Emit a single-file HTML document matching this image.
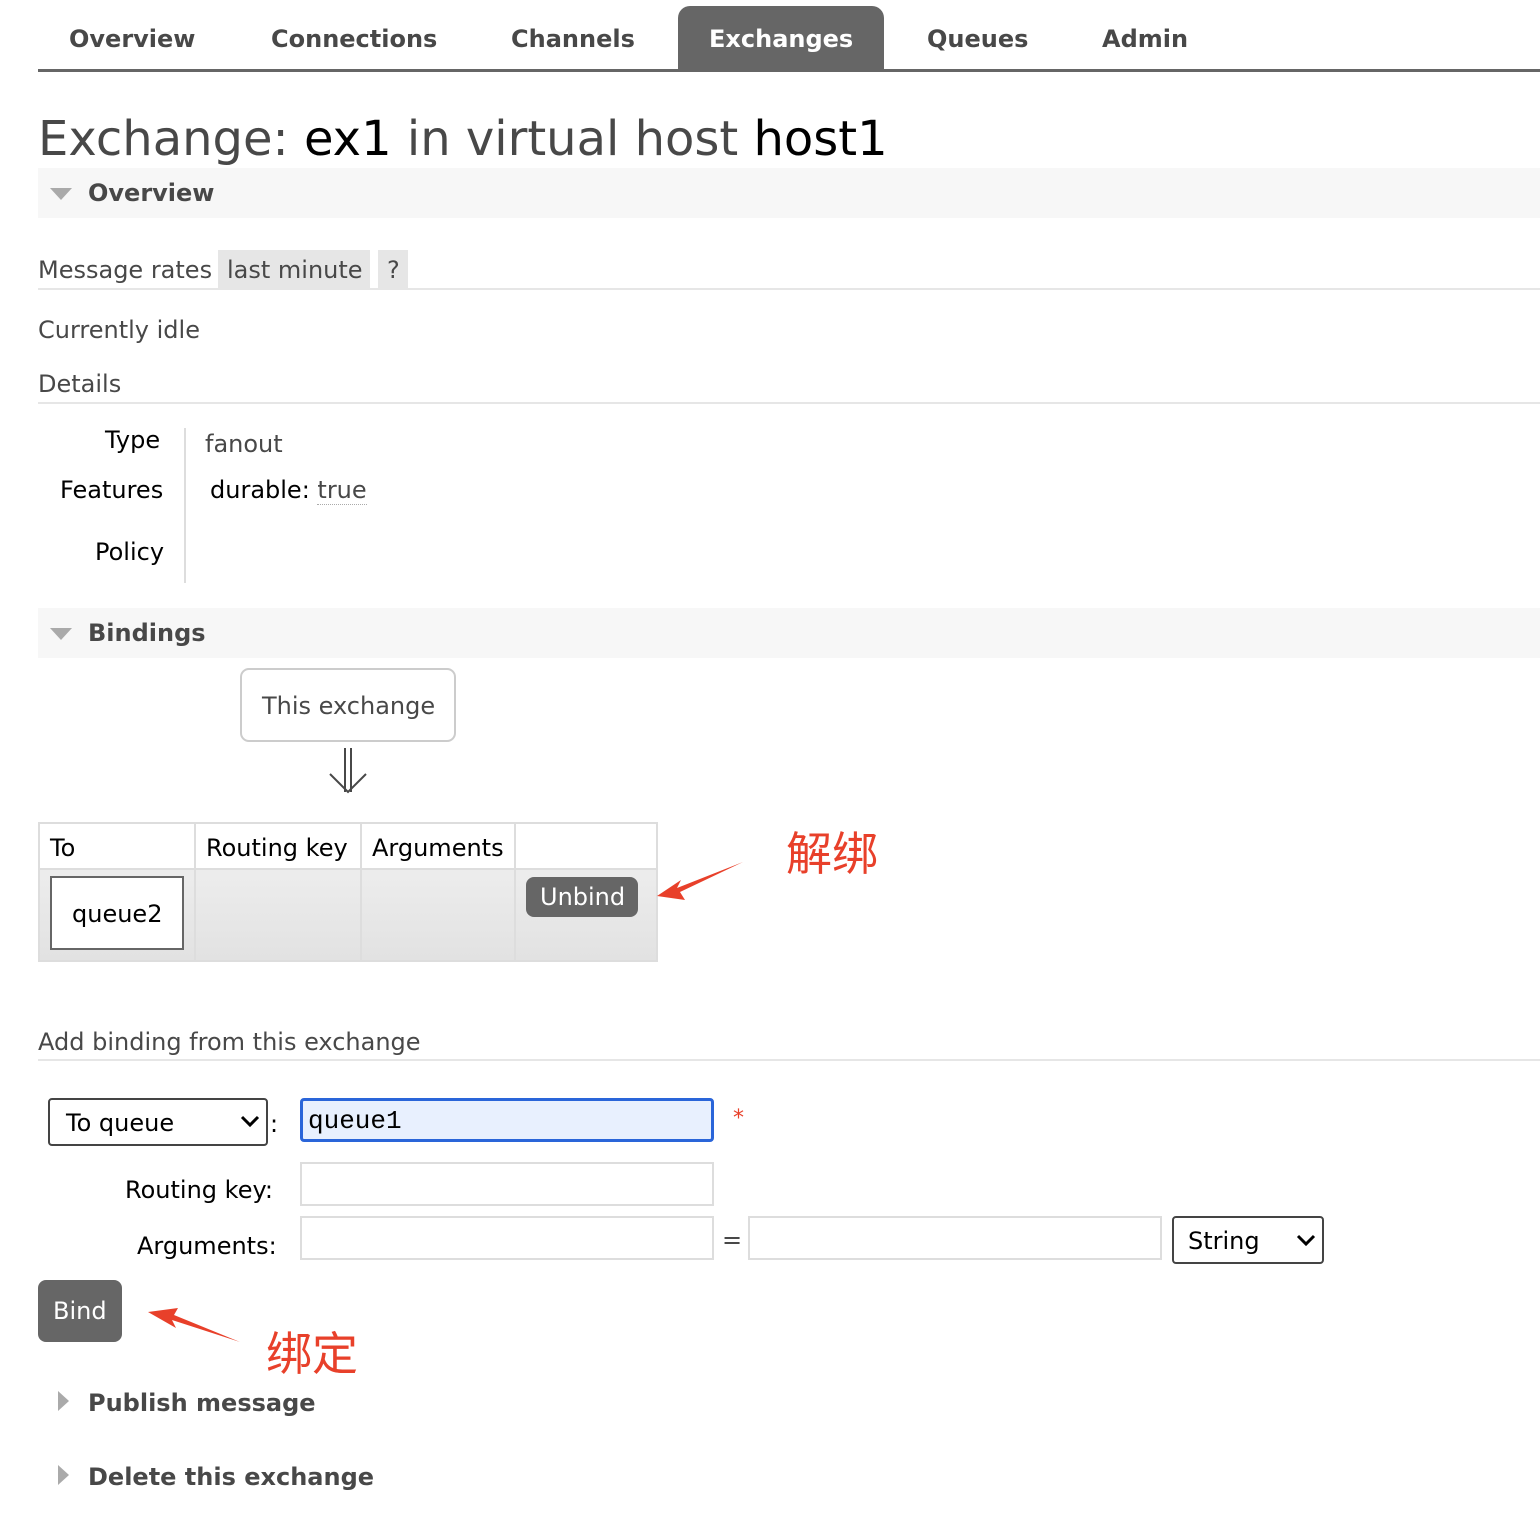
<!DOCTYPE html>
<html><head><meta charset="utf-8"><style>
*{box-sizing:border-box;margin:0;padding:0}
body{width:1540px;height:1524px;background:#fff;font-family:"DejaVu Sans","Liberation Sans",sans-serif;color:#484848;position:relative;overflow:hidden}
.a{position:absolute;white-space:nowrap}
.nav{font-weight:bold;font-size:24px;color:#484848}
.sec{position:absolute;left:38px;right:0;height:50px;background:#f7f7f7}
.sec b{position:absolute;left:50px;top:11px;font-size:24px;color:#484848}
.tri{position:absolute;left:12px;top:20px;width:0;height:0;border-left:11px solid transparent;border-right:11px solid transparent;border-top:12px solid #aaa}
.hr{position:absolute;left:38px;right:0;height:2px;background:#e6e6e6}
.f{font-size:24px}
.inp{position:absolute;border:2px solid #ddd;background:#fff}
.rt{position:absolute;width:0;height:0;border-top:10px solid transparent;border-bottom:10px solid transparent;border-left:11px solid #aaa}
</style></head><body>
<div class="a nav" style="left:69px;top:25px">Overview</div>
<div class="a nav" style="left:271px;top:25px">Connections</div>
<div class="a nav" style="left:511px;top:25px">Channels</div>
<div class="a" style="left:678px;top:6px;width:206px;height:65px;background:#666;border-radius:12px 12px 0 0"></div>
<div class="a nav" style="left:709px;top:25px;color:#fff">Exchanges</div>
<div class="a nav" style="left:927px;top:25px">Queues</div>
<div class="a nav" style="left:1102px;top:25px">Admin</div>
<div class="a" style="left:38px;top:69px;right:0;height:3px;background:#666"></div>

<div class="a" style="left:38px;top:111px;font-size:48px;color:#484848">Exchange: <span style="color:#000">ex1</span> in virtual host <span style="color:#000">host1</span></div>
<div class="sec" style="top:168px"><div class="tri"></div><b>Overview</b></div>

<div class="a f" style="left:38px;top:256px">Message rates</div>
<div class="a f" style="left:218px;top:250px;height:38px;width:152px;background:#e6e6e6;padding:6px 0 0 9px">last minute</div>
<div class="a f" style="left:378px;top:250px;height:38px;width:30px;background:#e6e6e6;padding:6px 0 0 9px">?</div>
<div class="hr" style="top:288px"></div>
<div class="a f" style="left:38px;top:316px">Currently idle</div>
<div class="a f" style="left:38px;top:370px">Details</div>
<div class="hr" style="top:402px"></div>
<div class="a f" style="left:105px;top:426px;color:#000">Type</div>
<div class="a f" style="left:60px;top:476px;color:#000">Features</div>
<div class="a f" style="left:95px;top:538px;color:#000">Policy</div>
<div class="a" style="left:184px;top:428px;width:2px;height:155px;background:#ddd"></div>
<div class="a f" style="left:205px;top:430px">fanout</div>
<div class="a f" style="left:210px;top:476px;color:#000">durable: <span style="color:#484848;border-bottom:1px dotted #aaa">true</span></div>

<div class="sec" style="top:608px"><div class="tri"></div><b>Bindings</b></div>
<div class="a f" style="left:240px;top:668px;width:216px;height:74px;border:2px solid #ccc;border-radius:9px;padding:22px 0 0 20px">This exchange</div>
<svg class="a" style="left:326px;top:746px" width="44" height="50"><g stroke="#484848" stroke-width="2" fill="none"><path d="M19 2V46M25 2V46M4 28L22 46L40 28"/></g></svg>

<div class="a" style="left:38px;top:822px;width:620px;height:140px;border:2px solid #ddd;background:linear-gradient(#f2f2f2,#e2e2e2)"></div>
<div class="a" style="left:40px;top:824px;width:616px;height:46px;background:#fff;border-bottom:2px solid #ddd"></div>
<div class="a" style="left:194px;top:824px;width:2px;height:136px;background:#ddd"></div>
<div class="a" style="left:360px;top:824px;width:2px;height:136px;background:#ddd"></div>
<div class="a" style="left:514px;top:824px;width:2px;height:136px;background:#ddd"></div>
<div class="a f" style="left:50px;top:834px;color:#000">To</div>
<div class="a f" style="left:206px;top:834px;color:#000">Routing key</div>
<div class="a f" style="left:372px;top:834px;color:#000">Arguments</div>
<div class="a f" style="left:50px;top:876px;width:134px;height:74px;border:2px solid #666;background:#fff;color:#000;padding:22px 0 0 20px">queue2</div>
<div class="a f" style="left:526px;top:877px;width:112px;height:40px;background:#666;border-radius:8px;color:#fff;padding:6px 0 0 14px">Unbind</div>
<svg class="a" style="left:655px;top:858px" width="90" height="44"><path d="M88 4L22 30L26 22L2 38L30 42L25 34Z" fill="#e8402a"/></svg>
<div class="a" style="left:786px;top:818px;font-size:46px;color:#e8402a;font-family:'Noto Sans CJK SC',sans-serif">解绑</div>

<div class="a f" style="left:38px;top:1028px">Add binding from this exchange</div>
<div class="hr" style="top:1059px"></div>
<div class="a" style="left:48px;top:1098px;width:220px;height:48px;border:2px solid #444;border-radius:4px;font-size:24px;color:#000;padding:9px 0 0 16px">To queue</div>
<svg class="a" style="left:240px;top:1114px" width="20" height="14"><path d="M2 3L10 11L18 3" stroke="#000" stroke-width="3" fill="none"/></svg>
<div class="a f" style="left:270px;top:1110px;color:#000">:</div>
<div class="a" style="left:300px;top:1098px;width:414px;height:44px;border:3px solid #2a65d9;border-radius:4px;background:#e8f0fe;font-family:'Liberation Mono',monospace;font-size:26px;color:#000;padding:5px 0 0 5px">queue1</div>
<div class="a" style="left:733px;top:1106px;font-size:22px;color:#e8402a">*</div>
<div class="a f" style="left:125px;top:1176px;color:#000">Routing key:</div>
<div class="inp" style="left:300px;top:1162px;width:414px;height:44px"></div>
<div class="a f" style="left:137px;top:1232px;color:#000">Arguments:</div>
<div class="inp" style="left:300px;top:1216px;width:414px;height:44px"></div>
<div class="a f" style="left:722px;top:1226px">=</div>
<div class="inp" style="left:748px;top:1216px;width:414px;height:44px"></div>
<div class="a" style="left:1172px;top:1216px;width:152px;height:48px;border:2px solid #444;border-radius:4px;font-size:24px;color:#000;padding:9px 0 0 14px">String</div>
<svg class="a" style="left:1296px;top:1233px" width="20" height="14"><path d="M2 3L10 11L18 3" stroke="#000" stroke-width="3" fill="none"/></svg>
<div class="a f" style="left:38px;top:1280px;width:84px;height:62px;background:#666;border-radius:8px;color:#fff;padding:17px 0 0 15px">Bind</div>
<svg class="a" style="left:146px;top:1304px" width="96" height="42"><path d="M94 38L26 16L30 24L2 8L32 4L28 11Z" fill="#e8402a"/></svg>
<div class="a" style="left:266px;top:1318px;font-size:46px;color:#e8402a;font-family:'Noto Sans CJK SC',sans-serif">绑定</div>

<div class="rt" style="left:58px;top:1391px"></div>
<div class="a" style="left:88px;top:1389px;font-size:24px;font-weight:bold">Publish message</div>
<div class="rt" style="left:58px;top:1465px"></div>
<div class="a" style="left:88px;top:1463px;font-size:24px;font-weight:bold">Delete this exchange</div>
</body></html>
